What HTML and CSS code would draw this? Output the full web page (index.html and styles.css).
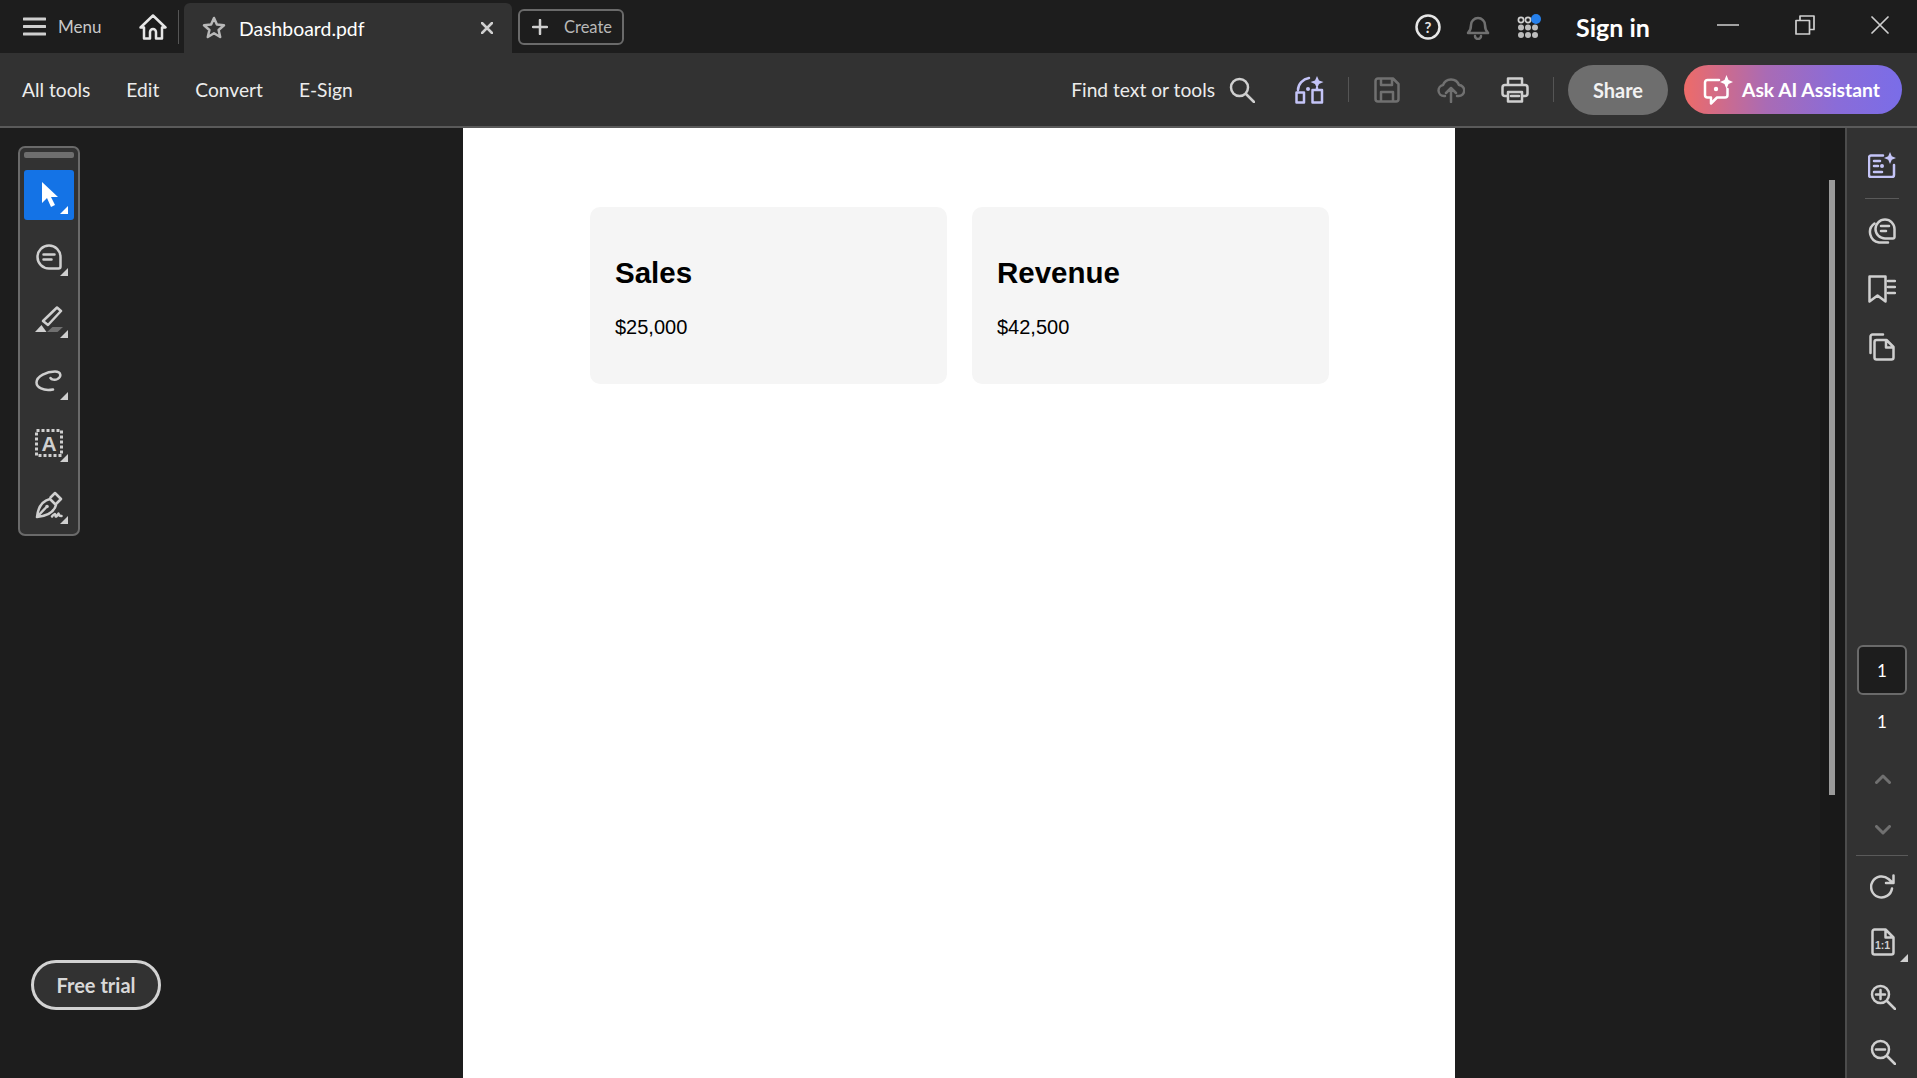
FILE: index.html
```html
<!DOCTYPE html>
<html lang="en">
<head>
<meta charset="UTF-8">
<title>Dashboard.pdf</title>
<link rel="stylesheet" href="styles.css">
</head>
<body>
<div class="app">
    <!-- title bar -->
    <header class="topbar">
        <div class="menu">
            <svg width="23" height="19" viewBox="0 0 23 19"><path d="M1 2h21M1 9.500h21M1 17h21" class="line wide"/></svg>
            <span>Menu</span>
        </div>
        <svg class="home" width="28" height="26" viewBox="0 0 28 26"><path d="M1.500 13.500 14 1.500l12.500 12h-3.500V24.500h-6V18a3 3 0 0 0-6 0v6.500H5V13.500z" class="line light"/></svg>
        <div class="top-divider"></div>
        <div class="tab">
            <svg width="24" height="24" viewBox="0 0 24 24"><path d="M12 2l2.900 6.600 7.100.7-5.400 4.700 1.600 7-6.200-3.700L5.800 21l1.600-7L2 9.300l7.100-.7z" class="line star"/></svg>
            <span class="tab-name">Dashboard.pdf</span>
            <svg class="tab-close" width="12" height="12" viewBox="0 0 12 12"><path d="M1 1l10 10M11 1 1 11" class="line"/></svg>
        </div>
        <div class="create">
            <svg width="16" height="16" viewBox="0 0 16 16"><path d="M8 1v14M1 8h14" class="line"/></svg>
            <span>Create</span>
        </div>
        <div class="top-right">
            <div class="slot">
                <svg width="26" height="26" viewBox="0 0 26 26"><circle cx="13" cy="13" r="11.500" class="line light"/><text x="13" y="18.500" class="glyph">?</text></svg>
            </div>
            <div class="slot">
                <svg width="24" height="26" viewBox="0 0 24 26"><path d="M2 19c2-2 3-4 3-8a7 7 0 0 1 14 0c0 4 1 6 3 8zM9 22a3 3 0 0 0 6 0" class="line dim"/></svg>
            </div>
            <div class="slot">
                <svg width="24" height="26" viewBox="0 0 24 26" class="apps">
                    <circle cx="4" cy="6" r="2.600" class="line thin"/><circle cx="11" cy="6" r="2.600" class="line thin"/>
                    <circle cx="4" cy="13.500" r="3" class="dot"/><circle cx="11" cy="13.500" r="3" class="dot"/><circle cx="18" cy="13.500" r="3" class="dot"/>
                    <circle cx="4" cy="21" r="3" class="dot"/><circle cx="11" cy="21" r="3" class="dot"/><circle cx="18" cy="21" r="3" class="dot"/>
                    <circle cx="19" cy="5" r="5" class="blue"/>
                </svg>
            </div>
            <div class="sign-in">Sign in</div>
            <div class="win-btn win-min"><svg width="22" height="2" viewBox="0 0 22 2"><path d="M0 1h22" class="line thin"/></svg></div>
            <div class="win-btn"><svg width="20" height="20" viewBox="0 0 20 20"><path d="M1 5.500h13.500V19H1zM5 5.500V1h14v13.500h-4.500" class="line thin"/></svg></div>
            <div class="win-btn"><svg width="18" height="18" viewBox="0 0 18 18"><path d="M1 1l16 16M17 1 1 17" class="line thin"/></svg></div>
        </div>
    </header>

    <!-- tool bar -->
    <div class="toolbar">
        <nav class="tool-nav">
            <span>All tools</span>
            <span>Edit</span>
            <span>Convert</span>
            <span>E-Sign</span>
        </nav>
        <div class="tool-right">
            <span class="find">Find text or tools</span>
            <svg class="search" width="26" height="26" viewBox="0 0 26 26"><circle cx="10.500" cy="10.500" r="8.500" class="line"/><path d="M17 17l8 8" class="line"/></svg>
            <div class="tool-slot ai-slot">
                <svg width="30" height="28" viewBox="0 0 30 28"><path d="M3 14C3 8 8 3 14 2M1.500 16.500h7.500v10H1.500zM17.500 14h9.500v12.500h-9.500zM22 14v-2" class="line purple"/><circle cx="13" cy="13" r="2" class="purple-fill"/><path d="M22 0l2 4.500L28.500 6 24 8l-2 4.500L20 8l-4.500-2L20 4.500z" class="purple-fill"/></svg>
            </div>
            <div class="tool-divider"></div>
            <div class="tool-slot">
                <svg width="26" height="26" viewBox="0 0 26 26"><path d="M4 1.500h15l5.500 5.500v15a2.500 2.500 0 0 1-2.500 2.500H4A2.500 2.500 0 0 1 1.500 22V4A2.500 2.500 0 0 1 4 1.500zM7 1.500V8h11V1.500M7 24.500V15h12v9.500" class="line dim"/></svg>
            </div>
            <div class="tool-slot">
                <svg width="28" height="26" viewBox="0 0 28 26"><path d="M8 19H7a5.500 5.500 0 0 1-1-10.900A8.500 8.500 0 0 1 22 8a5.500 5.500 0 0 1-.5 11H20M14 25V11M9 16l5-5 5 5" class="line dim"/></svg>
            </div>
            <div class="tool-slot">
                <svg width="28" height="26" viewBox="0 0 28 26"><path d="M7 8V1.500h14V8M7 19H4a2.500 2.500 0 0 1-2.500-2.500v-6A2.500 2.500 0 0 1 4 8h20a2.500 2.500 0 0 1 2.500 2.500v6A2.500 2.500 0 0 1 24 19h-3M7 15h14v9.500H7zM10 19h8" class="line"/></svg>
            </div>
            <div class="tool-divider share-gap"></div>
            <div class="share">Share</div>
            <div class="ask-ai">
                <svg width="30" height="30" viewBox="0 0 30 30"><path d="M16 5H4.500A2.500 2.500 0 0 0 2 7.500V20a2.500 2.500 0 0 0 2.500 2.500H8v6l6-6h8a2.500 2.500 0 0 0 2.500-2.500v-6" class="line white"/><circle cx="13" cy="14" r="2.200" class="white-fill"/><path d="M23.500 0l2 5 4.500 2-4.500 2-2 5-2-5-4.500-2 4.500-2z" class="white-fill"/></svg>
                <span>Ask AI Assistant</span>
            </div>
        </div>
    </div>

    <main class="workspace">
        <aside class="left-col">
            <div class="palette">
                <div class="handle"></div>
                <div class="tool active">
                    <svg width="20" height="28" viewBox="0 0 20 28"><path d="M3 1v21l5-5 4 9 4-2-4-8h7z" class="white-fill"/></svg>
                </div>
                <div class="tool">
                    <svg width="26" height="26" viewBox="0 0 26 26"><path d="M13 1.500a11.500 11.500 0 1 0 0 23h9.500a2 2 0 0 0 2-2V13A11.500 11.500 0 0 0 13 1.500zM7.500 10.500h11M7.500 15.500h8" class="line"/></svg>
                </div>
                <div class="tool">
                    <svg width="28" height="26" viewBox="0 0 28 26"><path d="M22 1.500l4 3.500-13 14-5-4z" class="line"/><path d="M0 26l6.500-7 5 7z" class="grey-fill"/><path d="M12 26l5.500-5H28l-5.500 5z" class="mid-fill"/></svg>
                </div>
                <div class="tool">
                    <svg width="28" height="22" viewBox="0 0 28 22"><path d="M18 19.500C8 21.500 1.500 17 1.500 12.500 1.500 6 12 1.500 20 1.500c6 0 7 5 2.500 7.500-3 1.500-6 .5-7-1" class="line"/></svg>
                </div>
                <div class="tool">
                    <svg width="28" height="28" viewBox="0 0 28 28"><rect x="1.500" y="1.500" width="25" height="25" class="dash"/><text x="14" y="21.500" class="box-letter">A</text></svg>
                </div>
                <div class="tool">
                    <svg width="28" height="28" viewBox="0 0 28 28"><path d="M2 26C3 16 7 10 15 8l6 6c-2 7-8 11-19 12zM15.500 6.500 20 2l6 6-4.500 4.500M2 26l8.500-9" class="line"/><circle cx="12" cy="15.500" r="1.800" class="grey-fill"/><path d="M17 25.500c2-3 3.500-3 3.500-1s1.500 1 3-2c0 2 1 2.500 3 2.500" class="line"/></svg>
                </div>
            </div>
            <button class="free-trial">Free trial</button>
        </aside>

        <section class="page">
            <div class="cards">
                <div class="card">
                    <h2>Sales</h2>
                    <p>$25,000</p>
                </div>
                <div class="card">
                    <h2>Revenue</h2>
                    <p>$42,500</p>
                </div>
            </div>
        </section>

        <div class="gutter">
            <div class="scroll-track"><div class="scroll-thumb"></div></div>
        </div>

        <aside class="rail">
            <div class="rail-group">
                <div class="rail-item">
                    <svg width="28" height="26" viewBox="0 0 28 26"><path d="M15 3.500H3A2 2 0 0 0 1 5.500V23a2 2 0 0 0 2 2h21a2 2 0 0 0 2-2V13" class="line purple"/><path d="M6 9h6M6 14h4M6 20h8" class="line purple"/><circle cx="14" cy="14" r="2" class="purple-fill"/><path d="M22 0l1.800 4.200L28 6l-4.200 1.800L22 12l-1.800-4.200L16 6l4.200-1.800z" class="purple-fill"/></svg>
                </div>
                <div class="rail-line top-line"></div>
                <div class="rail-item">
                    <svg width="28" height="26" viewBox="0 0 28 26"><path d="M17 1.500a9.500 9.500 0 1 0 0 19h8a1.500 1.500 0 0 0 1.500-1.500V11A9.500 9.500 0 0 0 17 1.500zM13 8h8M13 13h5" class="line"/><path d="M6.500 5.500A10.500 10.500 0 0 0 11 24.500h9" class="line"/></svg>
                </div>
                <div class="rail-item">
                    <svg width="28" height="28" viewBox="0 0 28 28"><path d="M1.500 1.500h16v25l-8-6-8 6zM20 6h7M20 12h7M20 18h7" class="line"/></svg>
                </div>
                <div class="rail-item">
                    <svg width="26" height="28" viewBox="0 0 26 28"><path d="M7.500 7h10l7 7v10.500a2 2 0 0 1-2 2h-15a2 2 0 0 1-2-2V9a2 2 0 0 1 2-2zM17 7v7.500h7.500" class="line"/><path d="M14 1.500H3.500a2 2 0 0 0-2 2V20" class="line"/></svg>
                </div>
            </div>
            <div class="rail-group">
                <div class="page-input">1</div>
                <div class="page-count">1</div>
                <div class="rail-item arrow">
                    <svg width="16" height="10" viewBox="0 0 16 10"><path d="M1.500 8.500 8 2l6.500 6.500" class="line dim wide"/></svg>
                </div>
                <div class="rail-item arrow">
                    <svg width="16" height="10" viewBox="0 0 16 10"><path d="M1.500 1.500 8 8l6.500-6.500" class="line dim wide"/></svg>
                </div>
                <div class="rail-line bottom-line"></div>
                <div class="rail-item">
                    <svg width="26" height="26" viewBox="0 0 26 26"><path d="M22 14.500a10.500 10.500 0 1 1-3.500-9.500l4.500 4M23.500 1.500V9H16" class="line"/></svg>
                </div>
                <div class="rail-item tool-mark">
                    <svg width="24" height="28" viewBox="0 0 24 28"><path d="M3.500 1.500h11l8 8v15a2 2 0 0 1-2 2h-17a2 2 0 0 1-2-2v-21a2 2 0 0 1 2-2zM14.500 1.500v8h8" class="line"/><text x="11.500" y="21" class="ratio">1:1</text></svg>
                </div>
                <div class="rail-item">
                    <svg width="26" height="26" viewBox="0 0 26 26"><circle cx="10.500" cy="10.500" r="8.500" class="line"/><path d="M17 17l8 8M10.500 6v9M6 10.500h9" class="line"/></svg>
                </div>
                <div class="rail-item">
                    <svg width="26" height="26" viewBox="0 0 26 26"><circle cx="10.500" cy="10.500" r="8.500" class="line"/><path d="M17 17l8 8M6 10.500h9" class="line"/></svg>
                </div>
            </div>
        </aside>
    </main>
</div>
</body>
</html>
```

FILE: styles.css
```css
body {
    margin: 0;
    padding: 0;
    background-color: #1d1d1d;
    font-family: Lato, "Noto Sans", sans-serif;
    overflow: hidden;
}
.app {
    width: 1917px;
    height: 1078px;
    display: flex;
    flex-direction: column;
    overflow: hidden;
}

/* svg helpers */
.line {
    fill: none;
    stroke: #cfcfcf;
    stroke-width: 2.500;
    stroke-linejoin: round;
    stroke-linecap: round;
}
.line.light { stroke: #e6e6e6; }
.line.dim { stroke: #707070; }
.line.thin { stroke-width: 1.700; }
.line.wide { stroke-width: 3; }
.line.star { stroke: #b8b8b8; }
.line.purple { stroke: #c4c4f7; }
.line.white { stroke: #fff; }
.purple-fill { fill: #c4c4f7; }
.white-fill { fill: #fff; }
.grey-fill { fill: #cfcfcf; }
.mid-fill { fill: #707070; }
.dot { fill: #bdbdbd; }
.blue { fill: #2680eb; }
.glyph {
    fill: #e6e6e6;
    font: bold 15px Lato, sans-serif;
    text-anchor: middle;
}
.box-letter {
    fill: #cfcfcf;
    font: bold 21px "Liberation Sans", sans-serif;
    text-anchor: middle;
}
.ratio {
    fill: #cfcfcf;
    font: bold 10.500px "Liberation Sans", sans-serif;
    text-anchor: middle;
}
.dash {
    fill: none;
    stroke: #cfcfcf;
    stroke-width: 3;
    stroke-dasharray: 3 2;
}

/* title bar */
.topbar {
    height: 53px;
    display: flex;
    align-items: center;
    flex-shrink: 0;
    background-color: #1d1d1d;
}
.menu {
    width: 116px;
    padding-left: 23px;
    display: flex;
    align-items: center;
    gap: 12px;
    color: #c8c8c8;
    font-size: 17px;
}
.home {
    flex-shrink: 0;
}
.top-divider {
    width: 1px;
    height: 34px;
    margin-left: 11px;
    background-color: #555;
}
.tab {
    width: 328px;
    height: 50px;
    margin-left: 5px;
    margin-top: 3px;
    box-sizing: border-box;
    padding-left: 18px;
    display: flex;
    align-items: center;
    background-color: #323232;
    border-radius: 6px 6px 0 0;
}
.tab-name {
    margin-left: 13px;
    color: #fff;
    font-size: 19.400px;
}
.tab-close {
    margin-left: auto;
    margin-right: 19px;
}
.create {
    width: 106px;
    height: 36px;
    margin-left: 6px;
    box-sizing: border-box;
    padding-left: 12px;
    display: flex;
    align-items: center;
    gap: 16px;
    border: 2px solid #6a6a6a;
    border-radius: 6px;
    color: #b8b8b8;
    font-size: 16.500px;
}
.top-right {
    margin-left: auto;
    display: flex;
    align-items: center;
}
.slot {
    width: 50px;
    display: flex;
    justify-content: center;
}
.apps {
    margin-left: 1px;
}
.sign-in {
    width: 116px;
    margin-left: 23px;
    color: #fff;
    font-size: 25px;
    font-weight: 700;
}
.win-btn {
    width: 75px;
    margin-bottom: 4px;
    display: flex;
    justify-content: center;
}
.win-min {
    box-sizing: border-box;
    padding-right: 3px;
}

/* tool bar */
.toolbar {
    height: 73px;
    display: flex;
    align-items: center;
    flex-shrink: 0;
    background-color: #323232;
    border-bottom: 2px solid #5a5a5a;
}
.tool-nav {
    padding-left: 22px;
    display: flex;
    gap: 36px;
    color: #ececec;
    font-size: 19.200px;
}
.tool-right {
    margin-left: auto;
    padding-right: 15px;
    display: flex;
    align-items: center;
}
.find {
    color: #ececec;
    font-size: 19.200px;
}
.search {
    margin-left: 14px;
}
.tool-slot {
    width: 64px;
    display: flex;
    justify-content: center;
}
.ai-slot {
    margin-left: 23px;
    margin-right: 6px;
}
.tool-divider {
    width: 1px;
    height: 25px;
    margin-right: 6px;
    background-color: #555;
}
.share-gap {
    margin-left: 6px;
    margin-right: 14px;
}
.share {
    width: 100px;
    height: 50px;
    display: flex;
    align-items: center;
    justify-content: center;
    background-color: #6e6e6e;
    border-radius: 25px;
    color: #f2f2f2;
    font-size: 20px;
    font-weight: 700;
}
.ask-ai {
    width: 218px;
    height: 49px;
    margin-left: 16px;
    box-sizing: border-box;
    padding-left: 19px;
    display: flex;
    align-items: center;
    gap: 9px;
    background: linear-gradient(90deg, #ee6b68 0%, #a96bb5 38%, #8a6cd8 70%, #7a6de8 100%);
    border-radius: 25px;
    color: #fff;
    font-size: 19.300px;
    font-weight: 700;
    white-space: nowrap;
}

/* workspace */
.workspace {
    flex: 1;
    display: flex;
    min-height: 0;
}
.left-col {
    width: 463px;
    flex-shrink: 0;
    box-sizing: border-box;
    padding: 18px 0 68px 18px;
    display: flex;
    flex-direction: column;
    justify-content: space-between;
    align-items: flex-start;
}
.palette {
    width: 62px;
    height: 390px;
    box-sizing: border-box;
    padding: 4px 4px 0;
    display: flex;
    flex-direction: column;
    gap: 12px;
    background-color: #323232;
    border: 2px solid #6a6a6a;
    border-radius: 7px;
}
.handle {
    height: 6px;
    background-color: #6e6e6e;
    border-radius: 2px;
}
.tool {
    height: 50px;
    flex-shrink: 0;
    display: flex;
    align-items: center;
    justify-content: center;
    position: relative;
    border-radius: 3px;
}
.tool::after {
    content: "";
    position: absolute;
    right: 6px;
    bottom: 6px;
    width: 8px;
    height: 8px;
    background-color: #cfcfcf;
    clip-path: polygon(100% 0, 100% 100%, 0 100%);
}
.tool.active {
    background-color: #1473e6;
}
.tool.active::after {
    background-color: #fff;
}
.free-trial {
    width: 130px;
    height: 50px;
    margin-left: 13px;
    padding: 0;
    background-color: #323232;
    border: 3px solid #d2d2d2;
    border-radius: 25px;
    color: #d8d8d8;
    font-family: Lato, "Noto Sans", sans-serif;
    font-size: 20px;
    font-weight: 700;
}

/* document */
.page {
    width: 992px;
    flex-shrink: 0;
    box-sizing: border-box;
    padding: 79px 126px 0 127px;
    background-color: #fff;
    font-family: "Liberation Sans", Arial, sans-serif;
    color: #000;
}
.cards {
    display: flex;
    gap: 25px;
}
.card {
    flex: 1;
    height: 177px;
    box-sizing: border-box;
    padding: 49px 25px 0;
    background-color: #f5f5f5;
    border-radius: 10px;
}
.card h2 {
    margin: 0;
    font-size: 29.500px;
    line-height: 34px;
}
.card p {
    margin: 26px 0 0;
    font-size: 20px;
    line-height: 23px;
}

.gutter {
    flex: 1;
    display: flex;
    justify-content: flex-end;
}
.scroll-track {
    width: 25px;
    box-sizing: border-box;
    padding: 52px 0 0 9px;
    background-color: #191919;
}
.scroll-thumb {
    width: 6px;
    height: 615px;
    background-color: #9a9a9a;
}

/* right rail */
.rail {
    width: 72px;
    flex-shrink: 0;
    box-sizing: border-box;
    padding: 15px 0 4px;
    display: flex;
    flex-direction: column;
    justify-content: space-between;
    background-color: #323232;
    border-left: 2px solid #4c4c4c;
}
.rail-group {
    display: flex;
    flex-direction: column;
    align-items: center;
}
.rail-item {
    height: 44px;
    width: 100%;
    box-sizing: border-box;
    display: flex;
    align-items: center;
    justify-content: center;
    flex-shrink: 0;
    margin-bottom: 14px;
    position: relative;
}
.rail-group:last-child .rail-item {
    margin-bottom: 11px;
    padding-left: 2px;
}
.rail-group:last-child .rail-item:last-child {
    margin-bottom: 0;
}
.rail-group:last-child .rail-item.arrow {
    margin-bottom: 7px;
}
.tool-mark::after {
    content: "";
    position: absolute;
    right: 9px;
    bottom: 2px;
    width: 8px;
    height: 8px;
    background-color: #cfcfcf;
    clip-path: polygon(100% 0, 100% 100%, 0 100%);
}
.rail-line {
    height: 1px;
    background-color: #5a5a5a;
}
.top-line {
    width: 34px;
    margin: -3px 0 10px;
}
.bottom-line {
    width: 52px;
    margin: -4px 0 9px;
}
.page-input {
    width: 50px;
    height: 50px;
    box-sizing: border-box;
    display: flex;
    align-items: center;
    justify-content: center;
    background-color: #1d1d1d;
    border: 2px solid #6a6a6a;
    border-radius: 6px;
    color: #fff;
    font-size: 17px;
}
.page-count {
    margin: 13px 0 21px;
    height: 28px;
    line-height: 28px;
    color: #fff;
    font-size: 17px;
}
```
